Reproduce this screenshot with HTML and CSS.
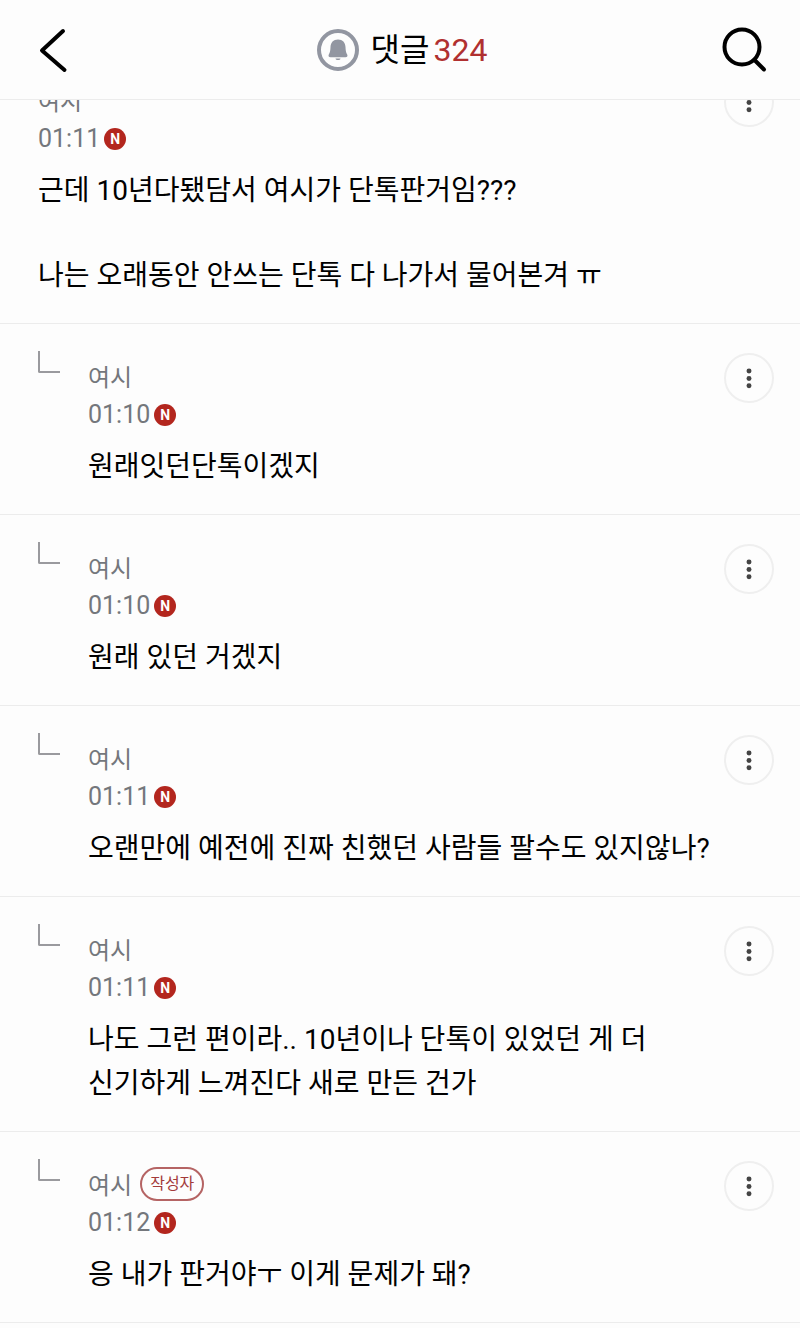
FILE: index.html
```html
<!DOCTYPE html>
<html lang="ko">
<head>
    <meta charset="UTF-8">
    <meta name="viewport" content="width=device-width, initial-scale=1.0">
    <title>댓글</title>
    <link rel="stylesheet" href="styles.css">
</head>
<body>
    <!-- Shared icon -->
    <svg class="sprite" aria-hidden="true">
        <symbol id="more" viewBox="0 0 50 50">
            <circle cx="25" cy="17.500" r="2.700"/>
            <circle cx="25" cy="25.500" r="2.700"/>
            <circle cx="25" cy="33.500" r="2.700"/>
        </symbol>
    </svg>

    <header class="header">
        <a class="back" href="#" aria-label="뒤로">
            <svg width="30" height="46" viewBox="0 0 30 46">
                <path d="M25 4L4 23.500L26.500 43" fill="none" stroke="#000" stroke-width="4" stroke-linecap="round" stroke-linejoin="round"/>
            </svg>
        </a>
        <div class="title">
            <button class="alarm" type="button" aria-label="알림">
                <svg width="42" height="42" viewBox="0 0 42 42">
                    <circle cx="21" cy="21" r="19" fill="none" stroke="#9296a1" stroke-width="4"/>
                    <path d="M21 10.500C16.300 10.500 13.700 13.600 13.500 18C13.300 22.500 12.800 23.500 11.800 25.600C11.100 27.200 11.800 28.300 13.500 28.300H28.500C30.200 28.300 30.900 27.200 30.200 25.600C29.200 23.500 28.700 22.500 28.500 18C28.300 13.600 25.700 10.500 21 10.500Z" fill="#9296a1"/>
                    <path d="M18.500 29.600H23.500C23.300 31.600 18.700 31.600 18.500 29.600Z" fill="#9296a1"/>
                </svg>
            </button>
            <h1>댓글 <span class="count">324</span></h1>
        </div>
        <button class="search" type="button" aria-label="검색">
            <svg width="46" height="46" viewBox="0 0 46 46">
                <circle cx="20" cy="20" r="17.500" fill="none" stroke="#000" stroke-width="4"/>
                <path d="M32.500 33L42 42.500" fill="none" stroke="#000" stroke-width="4" stroke-linecap="round"/>
            </svg>
        </button>
    </header>

    <main class="comments">
        <article class="comment">
            <div class="content">
                <div class="name">여시</div>
                <div class="time">01:11 <span class="new">N</span></div>
                <div class="text">
                    <p>근데 10년다됐담서 여시가 단톡판거임???</p>
                    <p>나는 오래동안 안쓰는 단톡 다 나가서 물어본겨 ㅠ</p>
                </div>
            </div>
            <button class="more" type="button" aria-label="더보기"><svg><use href="#more"/></svg></button>
        </article>

        <article class="comment reply">
            <div class="content">
                <div class="name">여시</div>
                <div class="time">01:10 <span class="new">N</span></div>
                <div class="text"><p>원래잇던단톡이겠지</p></div>
            </div>
            <button class="more" type="button" aria-label="더보기"><svg><use href="#more"/></svg></button>
        </article>

        <article class="comment reply">
            <div class="content">
                <div class="name">여시</div>
                <div class="time">01:10 <span class="new">N</span></div>
                <div class="text"><p>원래 있던 거겠지</p></div>
            </div>
            <button class="more" type="button" aria-label="더보기"><svg><use href="#more"/></svg></button>
        </article>

        <article class="comment reply">
            <div class="content">
                <div class="name">여시</div>
                <div class="time">01:11 <span class="new">N</span></div>
                <div class="text"><p>오랜만에 예전에 진짜 친했던 사람들 팔수도 있지않나?</p></div>
            </div>
            <button class="more" type="button" aria-label="더보기"><svg><use href="#more"/></svg></button>
        </article>

        <article class="comment reply">
            <div class="content">
                <div class="name">여시</div>
                <div class="time">01:11 <span class="new">N</span></div>
                <div class="text"><p>나도 그런 편이라.. 10년이나 단톡이 있었던 게 더<br>신기하게 느껴진다 새로 만든 건가</p></div>
            </div>
            <button class="more" type="button" aria-label="더보기"><svg><use href="#more"/></svg></button>
        </article>

        <article class="comment reply">
            <div class="content">
                <div class="name">여시 <span class="writer">작성자</span></div>
                <div class="time">01:12 <span class="new">N</span></div>
                <div class="text"><p>응 내가 판거야ㅜ 이게 문제가 돼?</p></div>
            </div>
            <button class="more" type="button" aria-label="더보기"><svg><use href="#more"/></svg></button>
        </article>
    </main>
</body>
</html>
```
FILE: styles.css
```css
* {
    box-sizing: border-box;
}

body {
    margin: 0;
    background: #fdfdfd;
    color: #000;
    font-family: Roboto, "Noto Sans CJK KR", sans-serif;
}

button {
    padding: 0;
    border: none;
    background: none;
    cursor: pointer;
}

svg {
    display: block;
}

.sprite {
    position: absolute;
    width: 0;
    height: 0;
}

/* Header stays above the scrolled list */
.header {
    position: fixed;
    top: 0;
    left: 0;
    right: 0;
    z-index: 1;
    display: grid;
    grid-template-columns: 1fr auto 1fr;
    align-items: center;
    height: 100px;
    padding: 0 32px 0 36px;
    background: #fdfdfd;
    border-bottom: 1px solid #ececec;
}

.back {
    justify-self: start;
    padding-left: 2px;
}

.title {
    display: flex;
    align-items: center;
    gap: 12px;
}

.search {
    justify-self: end;
}

h1 {
    display: flex;
    align-items: center;
    gap: 4px;
    margin: 0;
    font-size: 32px;
    font-weight: 400;
    line-height: 48px;
}

.count {
    color: #b03030;
}

/* The first comment is partly scrolled under the header */
.comments {
    padding-top: 48px;
}

.comment {
    position: relative;
    display: flex;
    align-items: flex-start;
    padding: 29px 26px 25px 38px;
    border-bottom: 1px solid #ececec;
}

.content {
    flex: 1;
    padding-top: 5px;
}

.reply {
    padding-left: 88px;
}

.reply::before {
    content: "";
    position: absolute;
    left: 38px;
    top: 27px;
    width: 20px;
    height: 20px;
    border-left: 2px solid #9a9a9e;
    border-bottom: 2px solid #9a9a9e;
    border-bottom-left-radius: 2px;
}

.name,
.time {
    display: flex;
    align-items: center;
    color: #74777c;
}

.name {
    gap: 8px;
    height: 35px;
    font-size: 24px;
}

.time {
    gap: 4px;
    height: 37px;
    margin-top: 3px;
    font-size: 25px;
}

.new {
    width: 22px;
    height: 22px;
    border-radius: 50%;
    background: #b3261e;
    color: #fff;
    font-size: 14px;
    font-weight: 700;
    line-height: 22px;
    text-align: center;
}

.writer {
    padding: 0 8px;
    border: 2px solid #b56464;
    border-radius: 17px;
    color: #a33a3a;
    font-size: 16px;
    line-height: 30px;
}

.text {
    display: grid;
    gap: 41px;
    margin-top: 12px;
    font-size: 28px;
    line-height: 44px;
}

.text p {
    margin: 0;
}

.more {
    width: 50px;
    height: 50px;
    border: 2px solid #efefef;
    border-radius: 50%;
}

.more svg {
    width: 46px;
    height: 46px;
    fill: #444;
}
```
